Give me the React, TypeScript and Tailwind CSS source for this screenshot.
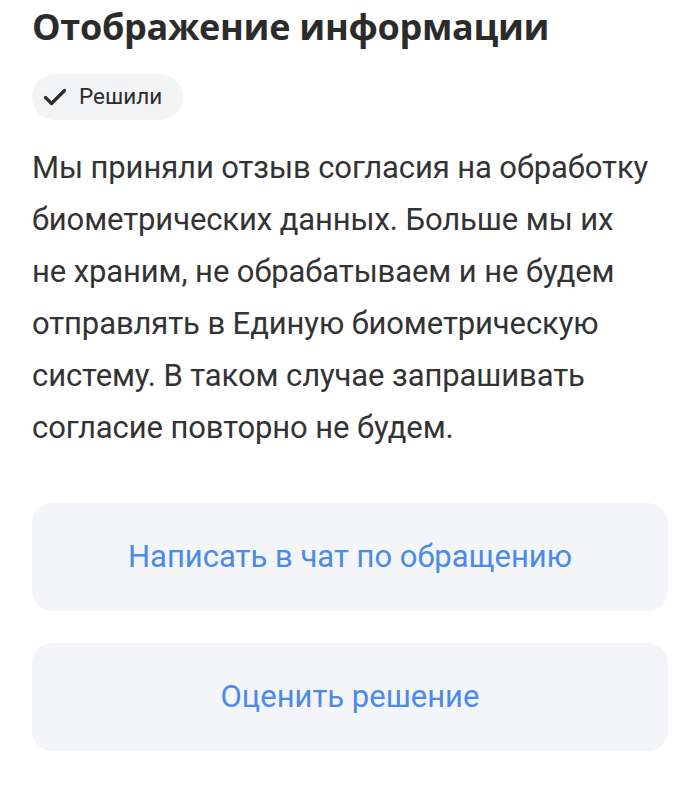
import React from 'react';

const Check: React.FC = () => (
  <svg
    className="w-[24px] h-[24px] text-[#2b2b2b]"
    viewBox="0 0 24 24"
    fill="none"
    stroke="currentColor"
    strokeWidth={3.2}
    strokeLinecap="round"
    strokeLinejoin="round"
  >
    <path d="M2.5 12.5l6 6L21.5 5.5" />
  </svg>
);

const ActionButton: React.FC<{ label: string }> = ({ label }) => (
  <button className="w-full h-[108px] rounded-[20px] bg-[#f3f5f8] flex items-center justify-center text-[31px] text-[#4a8ae8] font-['Roboto',sans-serif]">
    {label}
  </button>
);

export default function App() {
  return (
    <div className="w-[700px] h-[798px] bg-white px-[32px] font-['Roboto',sans-serif] text-[#333333]">
      <h1 className="pt-[3px] text-[36px] leading-[48px] font-bold font-['Open_Sans',sans-serif] tracking-[-0.3px] text-[#2b2b2b]">
        Отображение информации
      </h1>
      <div className="mt-[23px] inline-flex items-center gap-[12px] h-[46px] pl-[11px] pr-[21px] rounded-full bg-[#f3f4f6]">
        <Check />
        <span className="text-[22.5px] text-[#2b2b2b]">Решили</span>
      </div>
      <p className="mt-[22px] text-[31px] leading-[52px] -tracking-[0.1px]">
        Мы приняли отзыв согласия на обработку
        <br />
        биометрических данных. Больше мы их
        <br />
        не храним, не обрабатываем и не будем
        <br />
        отправлять в Единую биометрическую
        <br />
        систему. В таком случае запрашивать
        <br />
        согласие повторно не будем.
      </p>
      <div className="mt-[49px] flex flex-col gap-[32px]">
        <ActionButton label="Написать в чат по обращению" />
        <ActionButton label="Оценить решение" />
      </div>
    </div>
  );
}
